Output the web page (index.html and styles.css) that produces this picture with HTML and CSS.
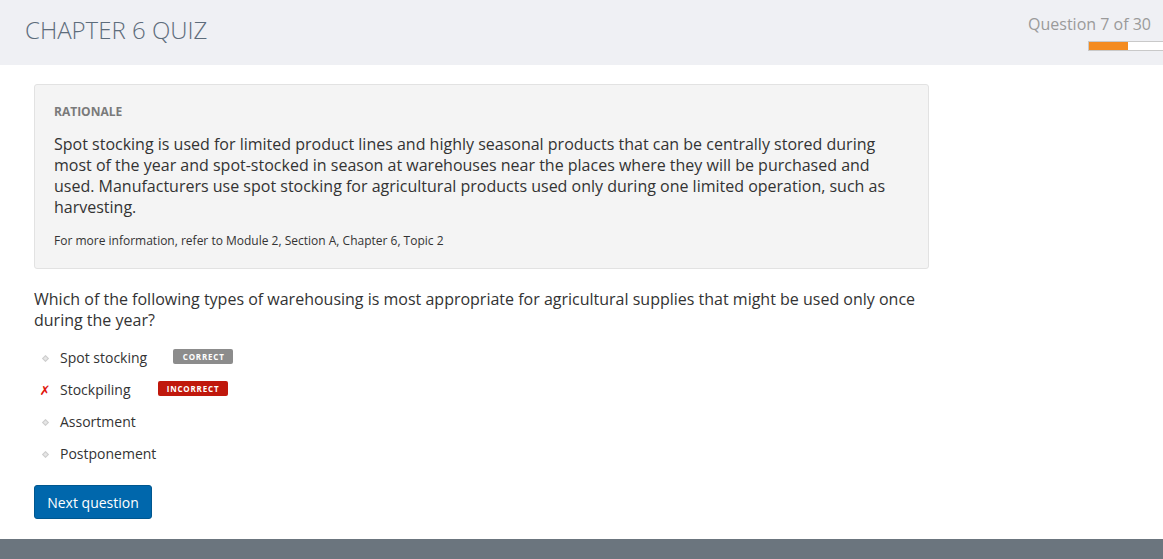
FILE: index.html
```html
<!DOCTYPE html>
<html>
<head>
<meta charset="utf-8">
<link rel="stylesheet" href="styles.css">
</head>
<body>
<header class="top">
  <h1 class="title">CHAPTER 6 QUIZ</h1>
  <div class="progress">
    <div class="progress-label">Question 7 of 30</div>
    <div class="bar"><div class="bar-fill" style="width:39px"></div></div>
  </div>
</header>
<main class="content">
  <section class="rationale">
    <h2 class="rationale-title">RATIONALE</h2>
    <p class="rationale-text">Spot stocking is used for limited product lines and highly seasonal products that can be centrally stored during most of the year and spot-stocked in season at warehouses near the places where they will be purchased and used. Manufacturers use spot stocking for agricultural products used only during one limited operation, such as harvesting.</p>
    <p class="rationale-ref">For more information, refer to Module 2, Section A, Chapter 6, Topic 2</p>
  </section>
  <p class="question">Which of the following types of warehousing is most appropriate for agricultural supplies that might be used only once during the year?</p>
  <ul class="options">
    <li class="option"><span class="mark"><span class="dot"></span></span><span class="opt-text">Spot stocking</span><span class="badge badge-correct">CORRECT</span></li>
    <li class="option"><span class="mark cross">✗</span><span class="opt-text">Stockpiling</span><span class="badge badge-incorrect">INCORRECT</span></li>
    <li class="option"><span class="mark"><span class="dot"></span></span><span class="opt-text">Assortment</span></li>
    <li class="option"><span class="mark"><span class="dot"></span></span><span class="opt-text">Postponement</span></li>
  </ul>
  <button class="next">Next question</button>
</main>
<footer class="bottom"></footer>
</body>
</html>
```
FILE: styles.css
```css
* { box-sizing: border-box; }
html, body { margin: 0; padding: 0; }
body {
  font-family: "Open Sans", "Liberation Sans", sans-serif;
  color: #333;
  background: #fff;
  width: 1163px;
  height: 559px;
  overflow: hidden;
  display: flex;
  flex-direction: column;
}
.top {
  height: 65px;
  background: #eff0f4;
  display: flex;
  justify-content: space-between;
  align-items: flex-start;
  flex-shrink: 0;
}
.title {
  margin: 14px 0 0 25px;
  font-weight: 300;
  font-size: 24px;
  line-height: 32px;
  color: #5d6c7b;
  letter-spacing: 0;
}
.progress {
  display: flex;
  flex-direction: column;
  align-items: flex-end;
  padding-top: 13px;
}
.progress-label {
  font-size: 16px;
  line-height: 22px;
  color: #9a9a9a;
  margin-right: 12px;
}
.bar {
  margin-top: 6px;
  width: 75px;
  height: 10px;
  border: 1px solid #c9c9c9;
  border-right: none;
  background: #fff;
  display: flex;
}
.bar-fill {
  height: 100%;
  background: #f48b1f;
}
.content {
  flex: 1;
  padding: 19px 0 0 34px;
  width: 929px;
}
.rationale {
  background: #f4f4f4;
  border: 1px solid #e2e2e2;
  border-radius: 3px;
  padding: 18px 20px 18px 19px;
}
.rationale-title {
  margin: 0;
  font-size: 12px;
  font-weight: 700;
  color: #7a7a7a;
  line-height: 18px;
}
.rationale-text {
  margin: 13px 0 0;
  font-size: 16px;
  line-height: 21px;
  color: #333;
}
.rationale-ref {
  margin: 14px 0 0;
  font-size: 12px;
  line-height: 18px;
  color: #333;
}
.question {
  margin: 20px 0 0;
  font-size: 16px;
  line-height: 21px;
  color: #333;
}
.options {
  list-style: none;
  margin: 11px 0 0;
  padding: 0;
}
.option {
  display: flex;
  align-items: center;
  height: 32px;
  font-size: 14px;
}
.mark {
  width: 26px;
  display: flex;
  align-items: center;
  justify-content: center;
  padding-right: 4px;
}
.dot {
  width: 5px;
  height: 5px;
  background: #e6e6e6;
  transform: rotate(45deg);
  border: 1px solid #cdcdcd;
}
.cross {
  color: #e0140c;
  font-size: 13px;
  font-weight: 700;
  font-style: italic;
  font-family: "DejaVu Sans", sans-serif;
}
.opt-text {
  color: #333;
  line-height: 20px;
}
.badge {
  font-size: 8px;
  font-weight: 700;
  letter-spacing: 0.8px;
  color: #fff;
  border-radius: 2px;
  height: 15px;
  line-height: 15px;
  padding: 0 0 0 1px;
  text-align: center;
  margin-top: -3px;
}
.badge-correct {
  background: #8c8c8c;
  width: 60px;
  margin-left: 26px;
}
.badge-incorrect {
  background: #c0180c;
  width: 70px;
  margin-left: 27px;
}
.next {
  margin-top: 15px;
  width: 118px;
  height: 34px;
  background: #0067ac;
  border: 1px solid #00578f;
  border-radius: 3px;
  color: #fff;
  font-family: "Open Sans", "Liberation Sans", sans-serif;
  font-size: 14px;
  padding: 0;
  cursor: pointer;
}
.bottom {
  height: 20px;
  background: #6b757e;
  flex-shrink: 0;
}
```
